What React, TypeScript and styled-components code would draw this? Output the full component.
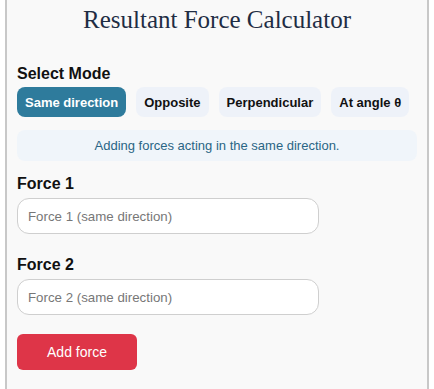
import React, { useState } from "react";
import styled, { createGlobalStyle } from "styled-components";

const GlobalStyle = createGlobalStyle`
    html, body {
        margin: 0;
        padding: 0;
        background: #ffffff;
    }
    * {
        box-sizing: border-box;
    }
`;

const Page = styled.div`
    padding: 0 5px;
    width: 434px;
`;

const Card = styled.div`
    background-color: #f9f9f9;
    border-left: 2px solid #c8c8c8;
    border-right: 2px solid #c8c8c8;
    padding: 5px 10px 20px 10px;
    width: 424px;
    min-height: 389px;
    font-family: "Liberation Sans", Arial, sans-serif;
`;

const Title = styled.h1`
    font-family: "Liberation Serif", "Times New Roman", serif;
    font-weight: normal;
    font-size: 25px;
    color: #1f2d44;
    text-align: center;
    margin: 0 0 29px 0;
    line-height: 30px;
`;

const Label = styled.div`
    font-size: 16px;
    font-weight: bold;
    color: #111;
    line-height: 20px;
    margin-bottom: 3px;
`;

const ModeRow = styled.div`
    display: flex;
    gap: 10px;
    margin-bottom: 13px;
`;

const ModeButton = styled.button<{ $active?: boolean }>`
    flex-shrink: 0;
    white-space: nowrap;
    height: 30px;
    padding: 0 8px;
    border: none;
    border-radius: 8px;
    font-family: "Liberation Sans", Arial, sans-serif;
    font-size: 13px;
    font-weight: bold;
    background-color: ${(p) => (p.$active ? "#2e7b9c" : "#eef2f9")};
    color: ${(p) => (p.$active ? "#ffffff" : "#111111")};
    cursor: pointer;
`;

const Info = styled.div`
    background-color: #f0f5fa;
    border-radius: 8px;
    color: #2a6585;
    font-size: 13px;
    text-align: center;
    padding: 8px 10px;
    line-height: 15px;
    margin-bottom: 13px;
`;

const Field = styled.div`
    display: flex;
    flex-direction: column;
    align-items: flex-start;
    margin-bottom: 21px;
`;

const FieldLabel = styled(Label)`
    margin-bottom: 4px;
`;

const Input = styled.input`
    width: 302px;
    height: 36px;
    border: 1px solid #cfcfcf;
    border-radius: 12px;
    background: #fff;
    padding: 0 10px;
    font-family: "Liberation Sans", Arial, sans-serif;
    font-size: 13.3px;
    color: #222;
    outline: none;
    &::placeholder {
        color: #777;
    }
`;

const AddButton = styled.button`
    width: 120px;
    height: 36px;
    border: none;
    border-radius: 6px;
    background-color: #de3548;
    color: #fff;
    font-family: "Liberation Sans", Arial, sans-serif;
    font-size: 14px;
    margin-top: -2px;
    cursor: pointer;
`;

const modes = ["Same direction", "Opposite", "Perpendicular", "At angle θ"];

const App: React.FC = () => {
    const [mode, setMode] = useState(0);
    return (
        <>
            <GlobalStyle />
            <Page>
                <Card>
                    <Title>Resultant Force Calculator</Title>
                    <Label>Select Mode</Label>
                    <ModeRow>
                        {modes.map((m, i) => (
                            <ModeButton key={m} $active={i === mode} onClick={() => setMode(i)}>
                                {m}
                            </ModeButton>
                        ))}
                    </ModeRow>
                    <Info>Adding forces acting in the same direction.</Info>
                    <Field>
                        <FieldLabel>Force 1</FieldLabel>
                        <Input placeholder="Force 1 (same direction)" />
                    </Field>
                    <Field>
                        <FieldLabel>Force 2</FieldLabel>
                        <Input placeholder="Force 2 (same direction)" />
                    </Field>
                    <AddButton>Add force</AddButton>
                </Card>
            </Page>
        </>
    );
};

export default App;
